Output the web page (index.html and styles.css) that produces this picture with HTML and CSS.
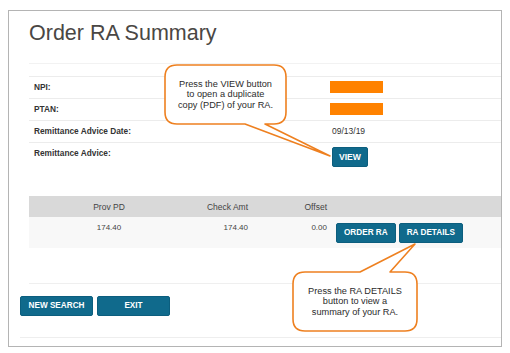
FILE: index.html
```html
<!DOCTYPE html>
<html>
<head>
<meta charset="utf-8">
<link rel="stylesheet" href="styles.css">
</head>
<body>
<div class="frame">
  <div class="content">
    <h1 class="title">Order RA Summary</h1>
    <div class="info">
      <div class="row row-blank"></div>
      <div class="row"><div class="label">NPI:</div><div class="value"><span class="redact"></span></div></div>
      <div class="row"><div class="label">PTAN:</div><div class="value"><span class="redact"></span></div></div>
      <div class="row"><div class="label">Remittance Advice Date:</div><div class="value"><span class="date">09/13/19</span></div></div>
      <div class="row row-last"><div class="label">Remittance Advice:</div><div class="value"><button class="btn btn-view">VIEW</button></div></div>
    </div>
    <div class="table">
      <div class="thead">
        <div class="c c1">Prov PD</div>
        <div class="c c2">Check Amt</div>
        <div class="c c3">Offset</div>
        <div class="c c4"></div>
      </div>
      <div class="tbody">
        <div class="c c1">174.40</div>
        <div class="c c2">174.40</div>
        <div class="c c3">0.00</div>
        <div class="c c4 actions-cell"><button class="btn">ORDER RA</button><button class="btn">RA DETAILS</button></div>
      </div>
    </div>
    <div class="divider"></div>
  </div>
  <div class="footer">
    <div class="footer-buttons">
      <button class="btn btn-wide">NEW SEARCH</button>
      <button class="btn btn-wide">EXIT</button>
    </div>
    <div class="footer-line"></div>
  </div>
</div>

<div class="callout callout-view">
  <svg class="callout-shape" width="510" height="353" viewBox="0 0 510 353">
    <path d="M177 65 H274 Q286 65 286 77 V112 Q286 124 274 124 H265 L330 156 L245 124 H177 Q165 124 165 112 V77 Q165 65 177 65 Z"/>
  </svg>
  <div class="callout-text text-view">Press the VIEW button<br>to open a duplicate<br>copy (PDF) of your RA.</div>
</div>

<div class="callout callout-details">
  <svg class="callout-shape" width="510" height="353" viewBox="0 0 510 353">
    <path d="M305 272 H360 L415 244 L390 272 H405 Q417 272 417 284 V319 Q417 331 405 331 H305 Q293 331 293 319 V284 Q293 272 305 272 Z"/>
  </svg>
  <div class="callout-text text-details">Press the RA DETAILS<br>button to view a<br>summary of your RA.</div>
</div>
</body>
</html>
```

FILE: styles.css
```css
* { box-sizing: border-box; }
html, body { margin: 0; padding: 0; background: #fff; }
body {
  position: relative;
  width: 510px;
  height: 353px;
  overflow: hidden;
  font-family: "Liberation Sans", Arial, sans-serif;
  color: #333;
}
.frame {
  margin: 10px 0 0 8px;
  width: 494px;
  border: 1px solid #b4b4b4;
  padding-bottom: 8px;
}
.content { padding-left: 20px; }
.title {
  margin: 10px 0 0 0;
  font-size: 21.5px;
  line-height: 24px;
  font-weight: normal;
  color: #4a4744;
}
.info { margin-top: 18px; }
.row {
  display: grid;
  grid-template-columns: 296px 1fr;
  padding-left: 5px;
  border-top: 1px solid #ececec;
  height: 22px;
  align-items: start;
}
.row-blank { height: 13px; border-top-color: #f2f2f2; }
.row-last { height: 30px; }
.label {
  font-size: 8.3px;
  font-weight: bold;
  line-height: 21px;
  color: #333;
}
.value { line-height: 21px; }
.redact {
  display: block;
  margin-top: 4px;
  width: 53px;
  height: 12px;
  background: #ff8200;
}
.date {
  display: block;
  font-size: 8.5px;
  line-height: 21px;
  margin-left: 2px;
  color: #333;
}
.btn {
  display: inline-flex;
  align-items: center;
  justify-content: center;
  height: 20px;
  padding: 0 7px;
  border: 1px solid #0c5e7e;
  border-radius: 2px;
  background: #106a8c;
  color: #fff;
  font-family: "Liberation Sans", Arial, sans-serif;
  font-size: 8.2px;
  font-weight: bold;
  line-height: 1;
  white-space: nowrap;
  margin: 0;
}
.btn-view {
  margin-top: 4px;
  margin-left: 2px;
  padding: 0 6px;
  font-size: 8.6px;
}
.table { margin-top: 24px; }
.thead, .tbody {
  display: grid;
  grid-template-columns: 160px 64px 79px 1fr;
}
.thead {
  background: #d9d9d9;
  height: 21px;
  align-items: center;
  font-size: 8.5px;
  color: #444;
}
.tbody {
  background: #f8f8f8;
  height: 31px;
  align-items: start;
  font-size: 8px;
  color: #444;
}
.tbody .c { padding-top: 6px; line-height: 10px; }
.c1 { text-align: center; }
.c2, .c3 { text-align: right; padding-right: 5px; }
.tbody .actions-cell {
  padding-top: 6px;
  padding-left: 4px;
  display: flex;
  gap: 3px;
}
.divider {
  margin-top: 35px;
  border-top: 1px solid #efefef;
}
.footer { padding-left: 11px; }
.footer-buttons {
  display: flex;
  gap: 4px;
  padding-top: 12px;
}
.btn-wide { width: 73px; padding: 0; }
.footer-line {
  margin-top: 21px;
  border-top: 1px solid #eeeeee;
}
.callout {
  position: absolute;
  left: 0;
  top: 0;
  width: 510px;
  height: 353px;
  pointer-events: none;
}
.callout-shape { position: absolute; left: 0; top: 0; }
.callout-shape path {
  fill: #fff;
  stroke: #ee8020;
  stroke-width: 1.6;
  stroke-linejoin: round;
}
.callout-text {
  position: absolute;
  display: flex;
  align-items: center;
  justify-content: center;
  text-align: center;
  font-size: 9.2px;
  line-height: 10.5px;
  color: #2b2b2b;
}
.text-view { left: 165px; top: 65px; width: 121px; height: 59px; }
.text-details { left: 293px; top: 272px; width: 124px; height: 59px; }
```
